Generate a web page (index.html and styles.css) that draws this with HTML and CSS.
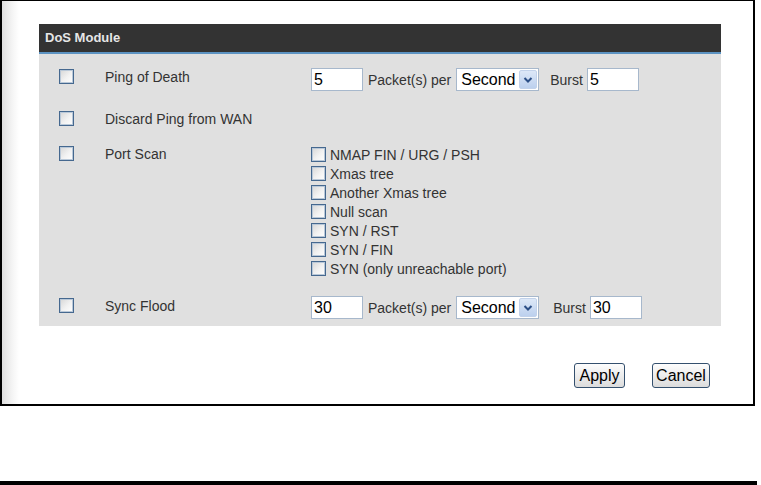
FILE: index.html
```html
<!DOCTYPE html>
<html>
<head>
<meta charset="utf-8">
<link rel="stylesheet" href="styles.css">
</head>
<body>
<div class="frame">
  <div class="panel">
    <div class="panel-head">DoS Module</div>
    <div class="panel-body">
      <div class="row r1">
        <span class="cb"></span>
        <span class="label">Ping of Death</span>
        <div class="ctrl">
          <input class="num" type="text" value="5">
          <span class="txt">Packet(s) per</span>
          <span class="select"><span class="sel-text">Second</span><span class="arrow"><svg width="10" height="8" viewBox="0 0 10 8"><path d="M1.5 2 L5 5.5 L8.5 2" fill="none" stroke="#2c4f86" stroke-width="2"/></svg></span></span>
          <span class="txt burst">Burst</span>
          <input class="num" type="text" value="5">
        </div>
      </div>
      <div class="row r2">
        <span class="cb"></span>
        <span class="label">Discard Ping from WAN</span>
      </div>
      <div class="row r3">
        <span class="cb"></span>
        <span class="label">Port Scan</span>
        <ul class="sublist">
          <li><span class="cb"></span>NMAP FIN / URG / PSH</li>
          <li><span class="cb"></span>Xmas tree</li>
          <li><span class="cb"></span>Another Xmas tree</li>
          <li><span class="cb"></span>Null scan</li>
          <li><span class="cb"></span>SYN / RST</li>
          <li><span class="cb"></span>SYN / FIN</li>
          <li><span class="cb"></span>SYN (only unreachable port)</li>
        </ul>
      </div>
      <div class="row r4">
        <span class="cb"></span>
        <span class="label">Sync Flood</span>
        <div class="ctrl">
          <input class="num" type="text" value="30">
          <span class="txt">Packet(s) per</span>
          <span class="select"><span class="sel-text">Second</span><span class="arrow"><svg width="10" height="8" viewBox="0 0 10 8"><path d="M1.5 2 L5 5.5 L8.5 2" fill="none" stroke="#2c4f86" stroke-width="2"/></svg></span></span>
          <span class="txt burst wide">Burst</span>
          <input class="num" type="text" value="30">
        </div>
      </div>
    </div>
  </div>
  <div class="actions">
    <button class="btn apply" type="button">Apply</button>
    <button class="btn cancel" type="button">Cancel</button>
  </div>
</div>
<div class="rule"></div>
</body>
</html>
```
FILE: styles.css
```css
html, body {
  margin: 0;
  padding: 0;
  background: #fff;
}
body {
  width: 761px;
  height: 485px;
  font-family: "Liberation Sans", Arial, sans-serif;
  color: #333;
  position: relative;
  overflow: hidden;
}
.frame {
  box-sizing: border-box;
  width: 755px;
  height: 406px;
  border-top: 1px solid #000;
  border-left: 2px solid #000;
  border-right: 2px solid #000;
  border-bottom: 2px solid #000;
  background: linear-gradient(to right, #dedede 0, #f4f4f4 10px, #fff 17px);
  padding-top: 23px;
  padding-left: 37px;
}
.panel {
  width: 682px;
}
.panel-head {
  height: 28px;
  line-height: 28px;
  background: #333;
  border-bottom: 2px solid #5c93c2;
  color: #e6e6e6;
  font-weight: bold;
  font-size: 13px;
  padding-left: 6px;
}
.panel-body {
  background: #e0e0e0;
  padding: 14px 0 7px 20px;
}
.row {
  display: grid;
  grid-template-columns: 46px 206px auto;
  align-items: start;
}
.r1 { height: 23px; }
.r2 { margin-top: 19px; }
.r3 { margin-top: 17px; }
.r4 { margin-top: 18px; height: 23px; }
.cb {
  box-sizing: border-box;
  display: block;
  width: 15px;
  height: 15px;
  border: 1px solid #45688f;
  box-shadow: inset 0 0 0 1px #b9c8d8;
  background: linear-gradient(135deg, #d6d6d6 0%, #f2f2f2 55%, #fff 100%);
  margin-top: 1px;
}
.r4 > .cb { margin-top: 2px; }
.label {
  font-size: 14px;
  line-height: 18px;
}
.r3 > .label { line-height: 19px; }
.r4 > .label { margin-top: 1px; }
.ctrl {
  display: flex;
  align-items: center;
  height: 23px;
}
.num {
  box-sizing: border-box;
  width: 52px;
  height: 23px;
  border: 1px solid #a7b8cc;
  background: #fff;
  font-family: "Liberation Sans", Arial, sans-serif;
  font-size: 16px;
  color: #000;
  padding: 0 2px;
  margin: 0;
  outline: none;
}
.txt {
  font-size: 14px;
  margin: 0 5px;
}
.burst { margin: 0 4px 0 11px; }
.burst.wide { margin-left: 14px; }
.select {
  box-sizing: border-box;
  display: flex;
  align-items: center;
  width: 83px;
  height: 23px;
  border: 1px solid #a7b8cc;
  background: #fff;
  padding: 1px 1px 1px 4px;
}
.sel-text {
  flex: 1;
  font-size: 16px;
  color: #000;
  line-height: 19px;
}
.arrow {
  box-sizing: border-box;
  width: 18px;
  height: 19px;
  display: flex;
  align-items: center;
  justify-content: center;
  background: linear-gradient(#dde8f7, #bcd0ee);
  border: 1px solid #c2d2ea;
  border-radius: 2px;
}
.sublist {
  list-style: none;
  margin: 0;
  padding: 0;
}
.sublist li {
  display: flex;
  align-items: center;
  height: 19px;
  font-size: 14px;
}
.sublist .cb {
  margin: 0 4px 0 0;
}
.actions {
  width: 682px;
  display: flex;
  justify-content: flex-end;
  gap: 27px;
  margin-top: 37px;
  padding-right: 11px;
  box-sizing: border-box;
}
.btn {
  box-sizing: border-box;
  height: 25px;
  border: 1px solid #34506e;
  border-radius: 3px;
  background: linear-gradient(#fdfdfd, #dcdcdc);
  font-family: "Liberation Sans", Arial, sans-serif;
  font-size: 16px;
  color: #000;
  padding: 0;
  margin: 0;
}
.apply { width: 51px; }
.cancel { width: 58px; }
.rule {
  width: 757px;
  height: 4px;
  background: #000;
  margin-top: 75px;
}
```
